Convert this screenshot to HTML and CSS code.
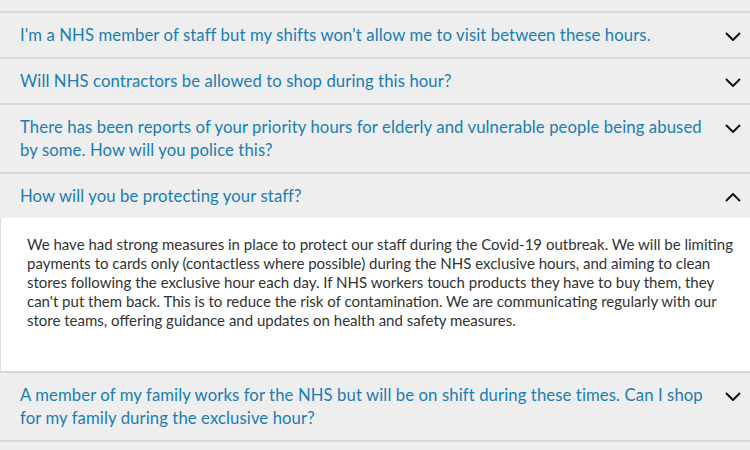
FILE: index.html
```html
<!DOCTYPE html>
<html lang="en">
<head>
<meta charset="utf-8">
<link rel="stylesheet" href="styles.css">
</head>
<body>
<div class="faq">
  <div class="item">
    <div class="q"><span class="q-text">I'm a NHS member of staff but my shifts won't allow me to visit between these hours.</span><svg class="chev" viewBox="0 0 16 9"><path d="M1 1l7 7 7-7"/></svg></div>
  </div>
  <div class="item">
    <div class="q"><span class="q-text">Will NHS contractors be allowed to shop during this hour?</span><svg class="chev" viewBox="0 0 16 9"><path d="M1 1l7 7 7-7"/></svg></div>
  </div>
  <div class="item">
    <div class="q"><span class="q-text">There has been reports of your priority hours for elderly and vulnerable people being abused by some. How will you police this?</span><svg class="chev" viewBox="0 0 16 9"><path d="M1 1l7 7 7-7"/></svg></div>
  </div>
  <div class="item open">
    <div class="q"><span class="q-text">How will you be protecting your staff?</span><svg class="chev" viewBox="0 0 16 9"><path d="M1 8l7-7 7 7"/></svg></div>
    <div class="a">We have had strong measures in place to protect our staff during the Covid-19 outbreak. We will be limiting payments to cards only (contactless where possible) during the NHS exclusive hours, and aiming to clean stores following the exclusive hour each day. If NHS workers touch products they have to buy them, they can't put them back. This is to reduce the risk of contamination. We are communicating regularly with our store teams, offering guidance and updates on health and safety measures.</div>
  </div>
  <div class="item">
    <div class="q"><span class="q-text">A member of my family works for the NHS but will be on shift during these times. Can I shop for my family during the exclusive hour?</span><svg class="chev" viewBox="0 0 16 9"><path d="M1 1l7 7 7-7"/></svg></div>
  </div>
</div>
</body>
</html>
```
FILE: styles.css
```css
html, body {
  margin: 0;
  padding: 0;
  background: #eeeeee;
}
.faq {
  padding-top: 11px;
  font-family: Lato, "Open Sans", sans-serif;
}
.item {
  border-top: 2px solid #d8d8d8;
}
.item:last-child {
  border-bottom: 2px solid #d8d8d8;
}
.q {
  display: flex;
  align-items: flex-start;
  justify-content: space-between;
  padding: 11px 9px 10px 20px;
  gap: 9px;
}
.q-text {
  color: #1a7db5;
  font-size: 16.7px;
  line-height: 23px;
  letter-spacing: 0.1px;
}
.chev {
  flex: none;
  width: 16px;
  height: 9px;
  margin-top: 8px;
  fill: none;
  stroke: #111;
  stroke-width: 2;
}
.a {
  background: #fff;
  border-left: 1px solid #dddddd;
  color: #333;
  font-size: 15px;
  line-height: 19px;
  padding: 17px 8px 41px 26px;
}
```
